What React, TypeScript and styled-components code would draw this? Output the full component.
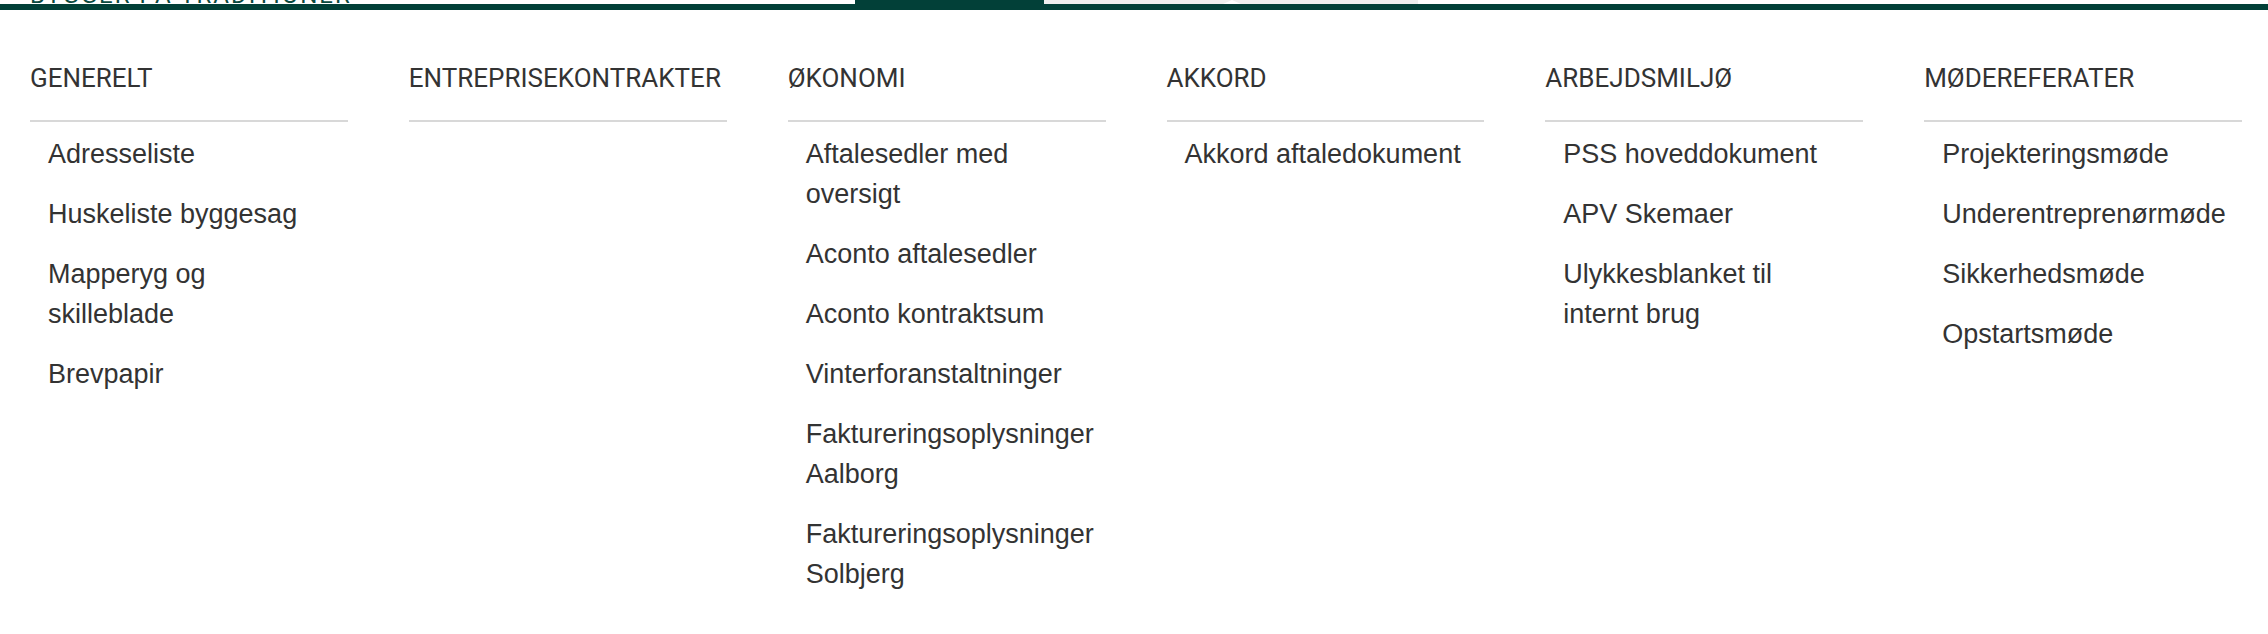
import React from 'react'
import styled, { createGlobalStyle } from 'styled-components'

const green = '#024038'
const textColor = '#333333'

const GlobalStyle = createGlobalStyle`
  html, body {
    margin: 0;
    padding: 0;
    background: #fff;
  }
  body {
    font-family: 'Liberation Sans', Arial, sans-serif;
    color: ${textColor};
  }
`

// Top of the header, mostly scrolled out of view
const TopStrip = styled.div`
  display: flex;
  height: 4px;
  overflow: hidden;
  padding-left: 30px;
`

const Tagline = styled.div`
  flex: none;
  width: 825px;
  height: 30px;
  margin-top: -20px;
  line-height: 30px;
  font-family: Roboto, 'Liberation Sans', sans-serif;
  font-size: 24px;
  letter-spacing: 2px;
  color: #0b4a40;
  white-space: nowrap;
`

const ActiveTab = styled.div`
  flex: none;
  width: 189px;
  background: ${green};
`

const SearchField = styled.div`
  position: relative;
  flex: none;
  width: 374px;
  background: #efefef;
`

const Notch = styled.span`
  position: absolute;
  left: 179px;
  bottom: 0;
  width: 0;
  height: 0;
  border-left: 9px solid transparent;
  border-right: 9px solid transparent;
  border-bottom: 4px solid #fff;
`

const GreenBar = styled.div`
  height: 6px;
  background: ${green};
`

// Mega menu
const MenuGrid = styled.nav`
  display: grid;
  grid-template-columns: repeat(6, 1fr);
  column-gap: 61px;
  padding: 48px 26px 40px 30px;
`

const Column = styled.section`
  display: flex;
  flex-direction: column;
  min-width: 0;
`

const Heading = styled.h3`
  margin: 0;
  padding-bottom: 21px;
  border-bottom: 2px solid #d8d8d8;
  font-family: Roboto, 'Liberation Sans', sans-serif;
  font-size: 26px;
  font-weight: 400;
  line-height: 41px;
  color: ${textColor};
  white-space: nowrap;
`

const ItemList = styled.ul`
  list-style: none;
  margin: 2px 0 0;
  padding: 0;
`

const ItemLink = styled.a`
  display: block;
  padding: 10px 16px 10px 18px;
  font-size: 27px;
  line-height: 40px;
  color: ${textColor};
  text-decoration: none;

  &:hover {
    color: ${green};
  }
`

const columns: { title: string; items: string[] }[] = [
  {
    title: 'GENERELT',
    items: ['Adresseliste', 'Huskeliste byggesag', 'Mapperyg og skilleblade', 'Brevpapir'],
  },
  { title: 'ENTREPRISEKONTRAKTER', items: [] },
  {
    title: 'ØKONOMI',
    items: [
      'Aftalesedler med oversigt',
      'Aconto aftalesedler',
      'Aconto kontraktsum',
      'Vinterforanstaltninger',
      'Faktureringsoplysninger Aalborg',
      'Faktureringsoplysninger Solbjerg',
    ],
  },
  { title: 'AKKORD', items: ['Akkord aftaledokument'] },
  {
    title: 'ARBEJDSMILJØ',
    items: ['PSS hoveddokument', 'APV Skemaer', 'Ulykkesblanket til internt brug'],
  },
  {
    title: 'MØDEREFERATER',
    items: ['Projekteringsmøde', 'Underentreprenørmøde', 'Sikkerhedsmøde', 'Opstartsmøde'],
  },
]

const App: React.FC = () => {
  return (
    <>
      <GlobalStyle />
      <header>
        <TopStrip>
          <Tagline>BYGGER PÅ TRADITIONER</Tagline>
          <ActiveTab />
          <SearchField>
            <Notch />
          </SearchField>
        </TopStrip>
        <GreenBar />
      </header>
      <MenuGrid>
        {columns.map((col) => (
          <Column key={col.title}>
            <Heading>{col.title}</Heading>
            <ItemList>
              {col.items.map((item) => (
                <li key={item}>
                  <ItemLink href="#">{item}</ItemLink>
                </li>
              ))}
            </ItemList>
          </Column>
        ))}
      </MenuGrid>
    </>
  )
}

export default App
